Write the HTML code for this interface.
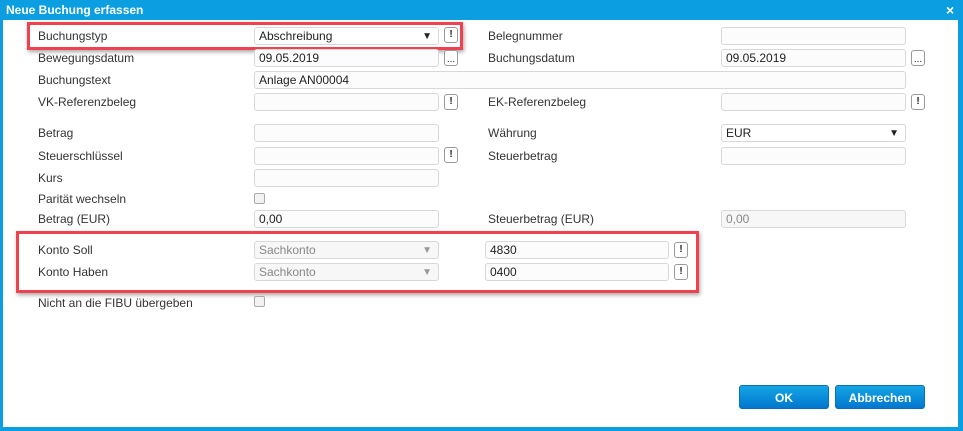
<!DOCTYPE html>
<html><head><style>
*{box-sizing:border-box;margin:0;padding:0}
body{width:963px;height:431px;background:#0b9ee0;position:relative;overflow:hidden;font-family:"Liberation Sans",Arial,sans-serif;font-size:12px;color:#333}
#win{position:absolute;left:3px;top:20px;width:955px;height:407px;background:#fff}
.title{position:absolute;left:6px;top:3px;color:#fff;font-weight:bold;font-size:12px}
.x{position:absolute;left:946px;top:2px;color:#fff;font-weight:bold;font-size:14px}
.l{position:absolute;font-size:12px;color:#333;line-height:14px}
.i{position:absolute;height:18px;border:1px solid #d8d8d8;border-radius:3px;background:#fcfcfc;font-size:12px;color:#222;padding-left:4px;line-height:16px}
.g{color:#888;background:#f7f7f7}
.b{position:absolute;width:14px;height:16px;border:1px solid #999;border-radius:3px;background:#fff;font-size:10px;font-weight:bold;text-align:center;line-height:14px;color:#222}
.arr{position:absolute;right:6px;top:1px;font-size:10px}
.cb{position:absolute;width:11px;height:11px;border:1px solid #aaa;border-radius:2px;background:#f2f2f2}
.red{position:absolute;border:3px solid #f0424e;box-shadow:1px 2px 4px rgba(0,0,0,.35)}
.btn{position:absolute;top:385px;height:24px;border-radius:3px;background:linear-gradient(#15a5e5,#0277cf);color:#fff;font-weight:bold;text-align:center;line-height:24px;font-size:12px;border:1px solid #0a6fb8}
</style></head><body>
<div class="title">Neue Buchung erfassen</div><div class="x">×</div>
<div id="win"></div>
<div class="red" style="left:27px;top:22px;width:436px;height:28px"></div>
<div class="red" style="left:16px;top:231px;width:683px;height:62px"></div>

<div class="l" style="left:38px;top:29px">Buchungstyp</div>
<div class="i" style="left:254px;top:27px;width:185px;background:#fff">Abschreibung<span class="arr">▼</span></div>
<div class="b" style="left:444px;top:27px">!</div>
<div class="l" style="left:38px;top:51px">Bewegungsdatum</div>
<div class="i" style="left:254px;top:49px;width:185px">09.05.2019</div>
<div class="b" style="left:444px;top:50px;line-height:18px;font-weight:normal">...</div>
<div class="l" style="left:38px;top:73px">Buchungstext</div>
<div class="i" style="left:254px;top:71px;width:652px">Anlage AN00004</div>
<div class="l" style="left:38px;top:95px">VK-Referenzbeleg</div>
<div class="i" style="left:254px;top:93px;width:185px"></div>
<div class="b" style="left:444px;top:94px">!</div>
<div class="l" style="left:38px;top:126px">Betrag</div>
<div class="i" style="left:254px;top:124px;width:185px"></div>
<div class="l" style="left:38px;top:149px">Steuerschlüssel</div>
<div class="i" style="left:254px;top:147px;width:185px"></div>
<div class="b" style="left:444px;top:147px">!</div>
<div class="l" style="left:38px;top:171px">Kurs</div>
<div class="i" style="left:254px;top:169px;width:185px"></div>
<div class="l" style="left:38px;top:192px">Parität wechseln</div>
<div class="cb" style="left:254px;top:193px"></div>
<div class="l" style="left:38px;top:212px">Betrag (EUR)</div>
<div class="i" style="left:254px;top:210px;width:185px">0,00</div>

<div class="l" style="left:488px;top:29px">Belegnummer</div>
<div class="i" style="left:721px;top:27px;width:185px"></div>
<div class="l" style="left:488px;top:51px">Buchungsdatum</div>
<div class="i" style="left:721px;top:49px;width:185px">09.05.2019</div>
<div class="b" style="left:911px;top:50px;line-height:18px;font-weight:normal">...</div>
<div class="l" style="left:488px;top:95px">EK-Referenzbeleg</div>
<div class="i" style="left:721px;top:93px;width:185px"></div>
<div class="b" style="left:911px;top:94px">!</div>
<div class="l" style="left:488px;top:126px">Währung</div>
<div class="i" style="left:721px;top:124px;width:185px;background:#fff">EUR<span class="arr">▼</span></div>
<div class="l" style="left:488px;top:149px">Steuerbetrag</div>
<div class="i" style="left:721px;top:147px;width:185px"></div>
<div class="l" style="left:488px;top:212px">Steuerbetrag (EUR)</div>
<div class="i g" style="left:721px;top:210px;width:185px">0,00</div>

<div class="l" style="left:38px;top:243px">Konto Soll</div>
<div class="i g" style="left:254px;top:241px;width:185px">Sachkonto<span class="arr" style="color:#999">▼</span></div>
<div class="i" style="left:485px;top:241px;width:184px">4830</div>
<div class="b" style="left:674px;top:242px">!</div>
<div class="l" style="left:38px;top:265px">Konto Haben</div>
<div class="i g" style="left:254px;top:263px;width:185px">Sachkonto<span class="arr" style="color:#999">▼</span></div>
<div class="i" style="left:485px;top:263px;width:184px">0400</div>
<div class="b" style="left:674px;top:264px">!</div>
<div class="l" style="left:38px;top:296px">Nicht an die FIBU übergeben</div>
<div class="cb" style="left:254px;top:296px"></div>

<div class="btn" style="left:739px;width:90px">OK</div>
<div class="btn" style="left:835px;width:90px">Abbrechen</div>
</body></html>
